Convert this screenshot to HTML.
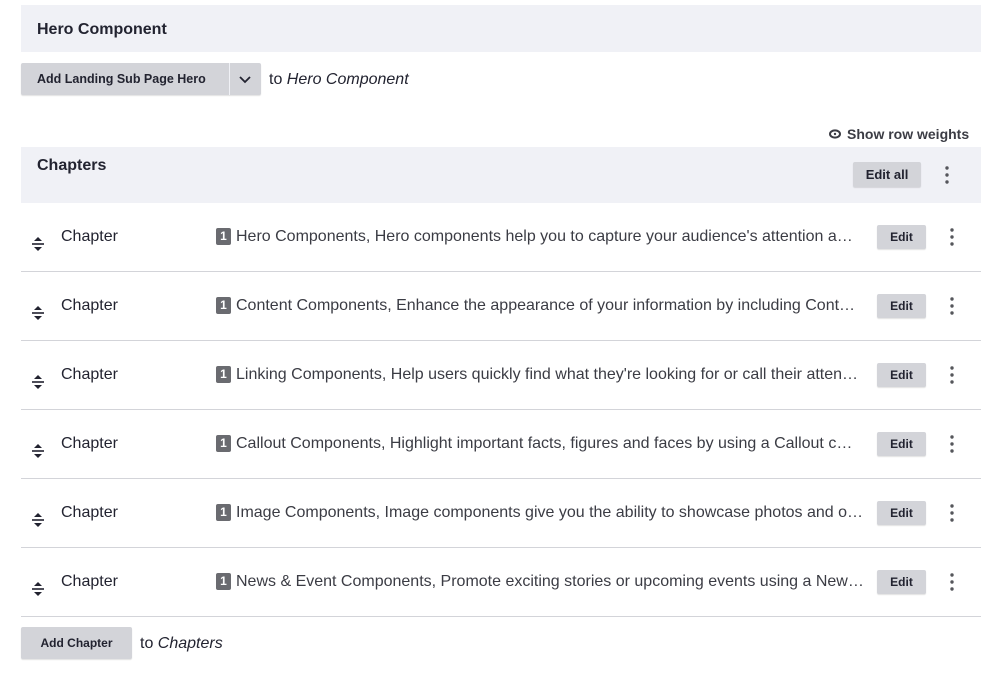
<!DOCTYPE html>
<html><head><meta charset="utf-8"><style>
*{box-sizing:border-box;margin:0;padding:0}
body{width:1007px;height:673px;background:#fff;font-family:"Liberation Sans",sans-serif;color:#222330;position:relative;overflow:hidden}
.abs{position:absolute}
.hdr{left:21px;width:960px;background:#f0f1f6}
.btn{background:#d3d4d9;border-radius:2px;font-weight:bold;font-size:12px;color:#222330;display:flex;align-items:center;justify-content:center;box-shadow:0 1px 1px rgba(0,0,0,.12)}
.row{left:21px;width:960px;height:69px;border-bottom:1px solid #d3d4d9}
.lbl{left:40px;top:25px;font-size:16px;color:#222330}
.sum{left:195px;top:25px;font-size:16px;color:#3b3c44;white-space:nowrap;width:650px;overflow:hidden}
.badge{display:inline-block;width:15px;height:17px;background:#6a6b70;color:#fff;border-radius:2px;font-size:12px;font-weight:bold;text-align:center;line-height:17px;margin-right:5px;vertical-align:1px}
.edit{left:856px;top:22px;width:49px;height:24px}
.keb{left:927px;top:24px}
.drag{left:10px;top:34px}
</style></head><body>
<div class="abs hdr" style="top:5px;height:47px"><div class="abs" style="left:16px;top:16px;font-weight:bold;font-size:16px">Hero Component</div></div>
<div class="abs btn" style="left:21px;top:63px;width:240px;height:32px;justify-content:flex-start">
<span style="margin-left:16px;width:192px;font-size:12.5px">Add Landing Sub Page Hero</span>
<span style="width:1px;height:32px;background:#f0f1f6"></span>
<svg width="31" height="32" viewBox="0 0 31 32"><path d="M10 14l5 5 5-5" fill="none" stroke="#222330" stroke-width="1.8"/></svg></div>
<div class="abs" style="left:269px;top:71px;font-size:16px">to <i>Hero Component</i></div>
<div class="abs" style="left:829px;top:126px;font-size:14px;font-weight:bold;color:#3b3c44;display:flex;align-items:center">
<svg width="12" height="10" viewBox="0 0 12 10" style="margin-right:6px"><ellipse cx="6" cy="5" rx="5" ry="3.6" fill="none" stroke="#3b3c44" stroke-width="2"/><circle cx="6" cy="5" r="1.2" fill="#3b3c44"/></svg>Show row weights</div>
<div class="abs hdr" style="top:147px;height:56px"><div class="abs" style="left:16px;top:10px;font-weight:bold;font-size:16px">Chapters</div>
<div class="abs btn" style="left:832px;top:15px;width:68px;height:25px;font-size:13px">Edit all</div>
<svg class="abs" style="left:922px;top:18px" width="8" height="20" viewBox="0 0 8 20"><circle cx="4" cy="3" r="1.7" fill="#55565b"/><circle cx="4" cy="10" r="1.7" fill="#55565b"/><circle cx="4" cy="17" r="1.7" fill="#55565b"/></svg></div>
<div id="rows"></div>
<div class="abs btn" style="left:21px;top:627px;width:111px;height:32px">Add Chapter</div>
<div class="abs" style="left:140px;top:635px;font-size:16px">to <i>Chapters</i></div>
<script>
var s=["Hero Components, Hero components help you to capture your audience's attention a…","Content Components, Enhance the appearance of your information by including Cont…","Linking Components, Help users quickly find what they're looking for or call their atten…","Callout Components, Highlight important facts, figures and faces by using a Callout c…","Image Components, Image components give you the ability to showcase photos and o…","News &amp; Event Components, Promote exciting stories or upcoming events using a New…"];
var h="";s.forEach(function(t,i){h+='<div class="abs row" style="top:'+(203+69*i)+'px"><svg class="abs drag" width="14" height="14" viewBox="0 0 14 14"><path d="M7 0l4 4H3z M7 14l4-4H3z" fill="#222330"/><rect x="1" y="6.2" width="12" height="1.6" fill="#222330"/></svg><div class="abs lbl">Chapter</div><div class="abs sum"><span class="badge">1</span>'+t+'</div><div class="abs btn edit">Edit</div><svg class="abs keb" width="8" height="20" viewBox="0 0 8 20"><circle cx="4" cy="3" r="1.7" fill="#55565b"/><circle cx="4" cy="10" r="1.7" fill="#55565b"/><circle cx="4" cy="17" r="1.7" fill="#55565b"/></svg></div>'});
document.getElementById("rows").innerHTML=h;
</script>
</body></html>
